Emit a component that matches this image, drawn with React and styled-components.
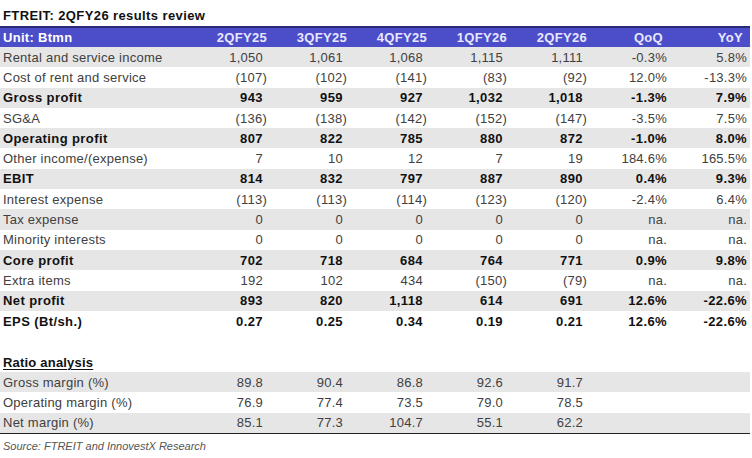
import React from "react";
import styled, { createGlobalStyle } from "styled-components";

const GlobalStyle = createGlobalStyle`
  body {
    margin: 0;
    background: #ffffff;
    font-family: "Liberation Sans", Arial, sans-serif;
  }
`;

const Page = styled.div`
  width: 750px;
  padding-top: 8px;
`;

const Title = styled.div`
  font-size: 13px;
  font-weight: 700;
  letter-spacing: 0.4px;
  color: #111;
  padding-left: 3px;
  height: 18px;
  line-height: 16px;
`;

const Grid = styled.div`
  display: grid;
  grid-template-columns: 190px repeat(7, 80px);
`;

const HeaderRow = styled(Grid)`
  height: 19px;
  background: #4b4dc9;
  border-top: 2px solid #2b2c78;
  align-items: center;
  color: #fff;
  font-weight: 700;
  font-size: 13px;
  letter-spacing: 0.3px;
`;

const HeadCell = styled.div`
  text-align: ${(p) => (p.$left ? "left" : "right")};
  padding: ${(p) => (p.$left ? "0 0 0 3px" : `0 ${p.$pad}px 0 0`)};
  color: ${(p) => (p.$left ? "#ffffff" : "#e8e8ff")};
`;

const Row = styled(Grid)`
  height: 20.3px;
  align-items: center;
  background: ${(p) => (p.$shade ? "#e6e6e6" : "#ffffff")};
  font-size: 13px;
  font-weight: ${(p) => (p.$bold ? 700 : 400)};
  letter-spacing: ${(p) => (p.$bold ? "0.4px" : "0.25px")};
  color: ${(p) => (p.$bold ? "#111" : "#404040")};
`;

const Label = styled.div`
  padding-left: 3px;
  white-space: nowrap;
`;

const Cell = styled.div`
  text-align: right;
  white-space: nowrap;
  padding-right: ${(p) => p.$pad}px;
`;

const Spacer = styled.div`
  height: 21px;
`;

const SectionTitle = styled.div`
  height: 20px;
  line-height: 22px;
  padding-left: 3px;
  font-size: 13px;
  font-weight: 700;
  letter-spacing: 0.2px;
  color: #111;
  text-decoration: underline;
  text-underline-offset: 2px;
`;

const RatioBlock = styled.div`
  border-bottom: 1.5px solid #222;
`;

const Source = styled.div`
  padding: 6px 0 0 3px;
  font-size: 11px;
  font-style: italic;
  color: #555;
`;

const columns = ["2QFY25", "3QFY25", "4QFY25", "1QFY26", "2QFY26", "QoQ", "YoY"];

const rows = [
  { label: "Rental and service income", values: ["1,050", "1,061", "1,068", "1,115", "1,111", "-0.3%", "5.8%"] },
  { label: "Cost of rent and service", values: ["(107)", "(102)", "(141)", "(83)", "(92)", "12.0%", "-13.3%"] },
  { label: "Gross profit", bold: true, values: ["943", "959", "927", "1,032", "1,018", "-1.3%", "7.9%"] },
  { label: "SG&A", values: ["(136)", "(138)", "(142)", "(152)", "(147)", "-3.5%", "7.5%"] },
  { label: "Operating profit", bold: true, values: ["807", "822", "785", "880", "872", "-1.0%", "8.0%"] },
  { label: "Other income/(expense)", values: ["7", "10", "12", "7", "19", "184.6%", "165.5%"] },
  { label: "EBIT", bold: true, values: ["814", "832", "797", "887", "890", "0.4%", "9.3%"] },
  { label: "Interest expense", values: ["(113)", "(113)", "(114)", "(123)", "(120)", "-2.4%", "6.4%"] },
  { label: "Tax expense", values: ["0", "0", "0", "0", "0", "na.", "na."] },
  { label: "Minority interests", values: ["0", "0", "0", "0", "0", "na.", "na."] },
  { label: "Core profit", bold: true, values: ["702", "718", "684", "764", "771", "0.9%", "9.8%"] },
  { label: "Extra items", values: ["192", "102", "434", "(150)", "(79)", "na.", "na."] },
  { label: "Net profit", bold: true, values: ["893", "820", "1,118", "614", "691", "12.6%", "-22.6%"] },
  { label: "EPS (Bt/sh.)", bold: true, values: ["0.27", "0.25", "0.34", "0.19", "0.21", "12.6%", "-22.6%"] },
];

const ratios = [
  { label: "Gross margin (%)", values: ["89.8", "90.4", "86.8", "92.6", "91.7", "", ""] },
  { label: "Operating margin (%)", values: ["76.9", "77.4", "73.5", "79.0", "78.5", "", ""] },
  { label: "Net margin (%)", values: ["85.1", "77.3", "104.7", "55.1", "62.2", "", ""] },
];

// accounting style: positives leave room for the closing bracket
const padFor = (value, i) => {
  if (i >= 5) return 3;
  return value.startsWith("(") ? 3 : 7;
};

const DataRow = ({ row, shade }) => (
  <Row $shade={shade} $bold={row.bold}>
    <Label>{row.label}</Label>
    {row.values.map((v, i) => (
      <Cell key={i} $pad={padFor(v, i)}>
        {v}
      </Cell>
    ))}
  </Row>
);

const App = () => {
  return (
    <>
      <GlobalStyle />
      <Page>
        <Title>FTREIT: 2QFY26 results review</Title>
        <HeaderRow>
          <HeadCell $left>Unit: Btmn</HeadCell>
          {columns.map((c, i) => (
            <HeadCell key={c} $pad={i >= 5 ? 7 : 3}>
              {c}
            </HeadCell>
          ))}
        </HeaderRow>
        {rows.map((row, i) => (
          <DataRow key={row.label} row={row} shade={i % 2 === 0} />
        ))}
        <Spacer />
        <SectionTitle>Ratio analysis</SectionTitle>
        <RatioBlock>
          {ratios.map((row, i) => (
            <DataRow key={row.label} row={row} shade={i % 2 === 0} />
          ))}
        </RatioBlock>
        <Source>Source: FTREIT and InnovestX Research</Source>
      </Page>
    </>
  );
};

export default App;
